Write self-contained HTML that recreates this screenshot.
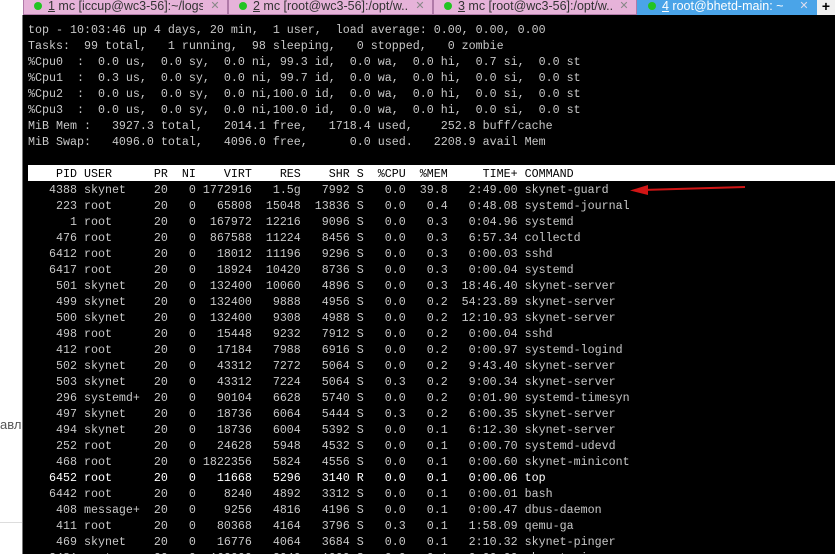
<!DOCTYPE html>
<html><head><meta charset="utf-8"><style>
body{margin:0;width:835px;height:554px;overflow:hidden;background:#fff;position:relative;font-family:"Liberation Sans",sans-serif}
#term{position:absolute;left:22px;top:15px;width:813px;height:539px;background:#000;border-left:1px solid #777;overflow:hidden}
pre{position:absolute;left:5px;top:7px;margin:0;font-family:"Liberation Mono",monospace;font-size:11.67px;line-height:16px;color:#c8c8c8;white-space:pre}
.hb{position:absolute;left:5px;top:150px;width:808px;height:16px;background:#fff}
.h{color:#000}
b{color:#fff;font-weight:normal}
.tab{position:absolute;top:0;height:14px;background:#e6b3d9;border:1px solid #b07aa8;border-top:none;font-size:12.5px;line-height:12px;color:#333;overflow:hidden;white-space:nowrap}
.tab .d{display:inline-block;width:8px;height:8px;border-radius:50%;background:#22c422;margin:0 6px 0 10px;vertical-align:0}
.tab .x{position:absolute;right:0;top:0;width:24px;text-align:center;color:#888;font-size:11px;background:inherit}
</style></head><body>
<div style="position:absolute;left:0;top:417px;color:#555;font-size:13px">авл</div>
<div style="position:absolute;left:0;top:522px;width:22px;height:1px;background:#ddd"></div>
<div id="term"><div class="hb"></div>
<pre>top - 10:03:46 up 4 days, 20 min,  1 user,  load average: 0.00, 0.00, 0.00
Tasks:  99 total,   1 running,  98 sleeping,   0 stopped,   0 zombie
%Cpu0  :  0.0 us,  0.0 sy,  0.0 ni, 99.3 id,  0.0 wa,  0.0 hi,  0.7 si,  0.0 st
%Cpu1  :  0.3 us,  0.0 sy,  0.0 ni, 99.7 id,  0.0 wa,  0.0 hi,  0.0 si,  0.0 st
%Cpu2  :  0.0 us,  0.0 sy,  0.0 ni,100.0 id,  0.0 wa,  0.0 hi,  0.0 si,  0.0 st
%Cpu3  :  0.0 us,  0.0 sy,  0.0 ni,100.0 id,  0.0 wa,  0.0 hi,  0.0 si,  0.0 st
MiB Mem :   3927.3 total,   2014.1 free,   1718.4 used,    252.8 buff/cache
MiB Swap:   4096.0 total,   4096.0 free,      0.0 used.   2208.9 avail Mem

<span class="h">    PID USER      PR  NI    VIRT    RES    SHR S  %CPU  %MEM     TIME+ COMMAND</span>
   4388 skynet    20   0 1772916   1.5g   7992 S   0.0  39.8   2:49.00 skynet-guard
    223 root      20   0   65808  15048  13836 S   0.0   0.4   0:48.08 systemd-journal
      1 root      20   0  167972  12216   9096 S   0.0   0.3   0:04.96 systemd
    476 root      20   0  867588  11224   8456 S   0.0   0.3   6:57.34 collectd
   6412 root      20   0   18012  11196   9296 S   0.0   0.3   0:00.03 sshd
   6417 root      20   0   18924  10420   8736 S   0.0   0.3   0:00.04 systemd
    501 skynet    20   0  132400  10060   4896 S   0.0   0.3  18:46.40 skynet-server
    499 skynet    20   0  132400   9888   4956 S   0.0   0.2  54:23.89 skynet-server
    500 skynet    20   0  132400   9308   4988 S   0.0   0.2  12:10.93 skynet-server
    498 root      20   0   15448   9232   7912 S   0.0   0.2   0:00.04 sshd
    412 root      20   0   17184   7988   6916 S   0.0   0.2   0:00.97 systemd-logind
    502 skynet    20   0   43312   7272   5064 S   0.0   0.2   9:43.40 skynet-server
    503 skynet    20   0   43312   7224   5064 S   0.3   0.2   9:00.34 skynet-server
    296 systemd+  20   0   90104   6628   5740 S   0.0   0.2   0:01.90 systemd-timesyn
    497 skynet    20   0   18736   6064   5444 S   0.3   0.2   6:00.35 skynet-server
    494 skynet    20   0   18736   6004   5392 S   0.0   0.1   6:12.30 skynet-server
    252 root      20   0   24628   5948   4532 S   0.0   0.1   0:00.70 systemd-udevd
    468 root      20   0 1822356   5824   4556 S   0.0   0.1   0:00.60 skynet-minicont
<b>   6452 root      20   0   11668   5296   3140 R   0.0   0.1   0:00.06 top</b>
   6442 root      20   0    8240   4892   3312 S   0.0   0.1   0:00.01 bash
    408 message+  20   0    9256   4816   4196 S   0.0   0.1   0:00.47 dbus-daemon
    411 root      20   0   80368   4164   3796 S   0.3   0.1   1:58.09 qemu-ga
    469 skynet    20   0   16776   4064   3684 S   0.0   0.1   2:10.32 skynet-pinger
   3481 root      20   0  162000   3940   1000 S   0.0   0.1   0:00.00 skynet-pinger</pre>
</div>
<div class="tab" style="left:23px;width:203px"><span class="d"></span><u>1</u> mc [iccup@wc3-56]:~/logs<span class="x">✕</span></div>
<div class="tab" style="left:228px;width:203px"><span class="d"></span><u>2</u> mc [root@wc3-56]:/opt/w...<span class="x">✕</span></div>
<div class="tab" style="left:433px;width:202px"><span class="d"></span><u>3</u> mc [root@wc3-56]:/opt/w...<span class="x">✕</span></div>
<div class="tab" style="left:637px;width:178px;background:#4aa4e8;border-color:#4aa4e8;color:#fff"><span class="d"></span><u>4</u> root@bhetd-main: ~<span class="x" style="color:#dde">✕</span></div>
<div style="position:absolute;left:817px;top:0;width:18px;height:15px;background:#f0f0f0;font-size:14px;line-height:12px;text-align:center;font-weight:bold">+</div>
<svg style="position:absolute;left:0;top:0" width="835" height="554"><line x1="642" y1="190" x2="745" y2="187" stroke="#d01515" stroke-width="2"/><polygon points="630,190.5 648,185 648,195" fill="#d01515"/></svg>
</body></html>
